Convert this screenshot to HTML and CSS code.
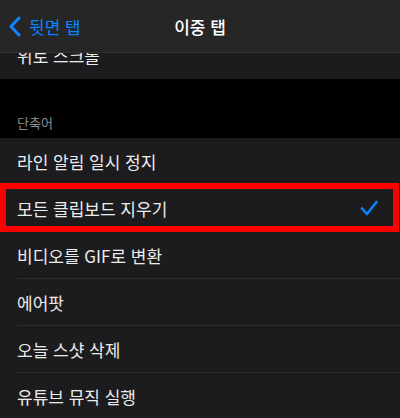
FILE: index.html
```html
<!DOCTYPE html>
<html lang="ko">
<head>
    <meta charset="UTF-8">
    <meta name="viewport" content="width=device-width, initial-scale=1.0">
    <title>이중 탭</title>
    <link rel="stylesheet" href="styles.css">
</head>
<body>
    <div class="screen">
        <div class="navbar">
            <div class="back">
                <svg class="chevron" width="13" height="21" viewBox="0 0 13 21">
                    <path d="M11 2 L3 10.5 L11 19" fill="none" stroke="#0a84ff" stroke-width="3" stroke-linecap="round" stroke-linejoin="round"/>
                </svg>
                <span>뒷면 탭</span>
            </div>
            <div class="title">이중 탭</div>
        </div>

        <div class="group">
            <div class="row clipped"><span>위로 스크롤</span></div>
        </div>

        <div class="section-label">단축어</div>

        <div class="group">
            <div class="row">라인 알림 일시 정지</div>
            <div class="row selected">
                모든 클립보드 지우기
                <svg class="check" width="18" height="16" viewBox="0 0 18 16">
                    <path d="M2 8.5 L7 14 L16.5 2" fill="none" stroke="#0a84ff" stroke-width="2.6" stroke-linecap="round" stroke-linejoin="round"/>
                </svg>
                <div class="highlight"></div>
            </div>
            <div class="row">비디오를 GIF로 변환</div>
            <div class="row">에어팟</div>
            <div class="row">오늘 스샷 삭제</div>
            <div class="row">유튜브 뮤직 실행</div>
        </div>
    </div>
</body>
</html>
```

FILE: styles.css
```css
body {
    margin: 0;
    padding: 0;
    background-color: #000;
    font-family: "Noto Sans CJK KR", "Noto Sans", sans-serif;
    color: #fff;
}
.screen {
    width: 400px;
    height: 418px;
    overflow: hidden;
    background-color: #000;
}
.navbar {
    height: 52px;
    background-color: #262626;
    border-bottom: 1px solid #333;
    display: flex;
    align-items: center;
    justify-content: center;
    position: relative;
}
.back {
    position: absolute;
    left: 8px;
    top: 0;
    height: 52px;
    display: flex;
    align-items: center;
    gap: 8px;
    color: #0a84ff;
    font-size: 17px;
}
.title {
    font-size: 17px;
    font-weight: 500;
}
.group {
    background-color: #1c1c1e;
}
.row {
    height: 47px;
    margin-left: 17px;
    border-bottom: 1px solid #2e2e30;
    box-sizing: border-box;
    display: flex;
    align-items: center;
    font-size: 17px;
    color: #ececec;
    position: relative;
}
.row:last-child {
    border-bottom: none;
}
.row.clipped {
    height: 26px;
    overflow: hidden;
    align-items: flex-end;
    margin-left: 0;
    padding-left: 17px;
    border-bottom: none;
}
.row.clipped span {
    line-height: 47px;
}
.section-label {
    height: 59px;
    box-sizing: border-box;
    padding: 0 17px 6px;
    display: flex;
    align-items: flex-end;
    font-size: 13px;
    color: #8d8d93;
    background-color: #000;
}
.check {
    margin-left: auto;
    margin-right: 22px;
}
.highlight {
    position: absolute;
    left: -17px;
    right: 1px;
    top: -2px;
    bottom: -1px;
    border: 6px solid #ff0000;
}
```
